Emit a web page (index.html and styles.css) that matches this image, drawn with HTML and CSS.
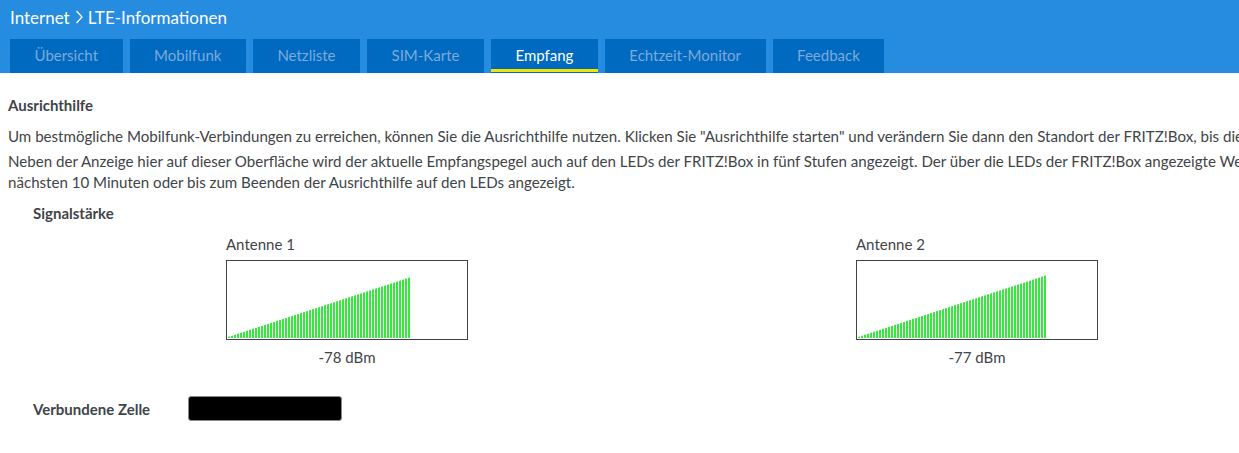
FILE: index.html
```html
<!DOCTYPE html>
<html lang="de">
<head>
<meta charset="utf-8">
<title>LTE-Informationen</title>
<link rel="stylesheet" href="styles.css">
</head>
<body>
<header class="top">
  <h1 class="crumb">Internet<svg class="chev" width="9" height="14" viewBox="0 0 9 14"><polyline points="1.5,1 7,7 1.5,13" fill="none" stroke="#fff" stroke-width="1.3"/></svg>LTE-Informationen</h1>
  <nav class="tabs">
    <a class="tab">Übersicht</a>
    <a class="tab">Mobilfunk</a>
    <a class="tab">Netzliste</a>
    <a class="tab">SIM-Karte</a>
    <a class="tab active">Empfang</a>
    <a class="tab">Echtzeit-Monitor</a>
    <a class="tab">Feedback</a>
  </nav>
</header>
<main class="content">
  <h2 class="section-title">Ausrichthilfe</h2>
  <p class="text">Um bestmögliche Mobilfunk-Verbindungen zu erreichen, können Sie die Ausrichthilfe nutzen. Klicken Sie "Ausrichthilfe starten" und verändern Sie dann den Standort der FRITZ!Box, bis die Signalstärke optimal ist.</p>
  <p class="text">Neben der Anzeige hier auf dieser Oberfläche wird der aktuelle Empfangspegel auch auf den LEDs der FRITZ!Box in fünf Stufen angezeigt. Der über die LEDs der FRITZ!Box angezeigte Wert wird für die<br>nächsten 10 Minuten oder bis zum Beenden der Ausrichthilfe auf den LEDs angezeigt.</p>
  <section class="signal">
    <h3 class="label">Signalstärke</h3>
    <div class="antennas">
      <div class="antenna">
        <div class="ant-name">Antenne 1</div>
        <div class="meter"><div class="bars" style="width:183px;height:61px"></div></div>
        <div class="dbm">-78 dBm</div>
      </div>
      <div class="antenna">
        <div class="ant-name">Antenne 2</div>
        <div class="meter"><div class="bars" style="width:189px;height:63px"></div></div>
        <div class="dbm">-77 dBm</div>
      </div>
    </div>
    <div class="cell-row">
      <span class="label">Verbundene Zelle</span>
      <span class="redacted"></span>
    </div>
  </section>
</main>
</body>
</html>
```
FILE: styles.css
```css
html, body {
  margin: 0;
  padding: 0;
  overflow: hidden;
  background: #fff;
}
body {
  font-family: Lato, "Open Sans", sans-serif;
  color: #3f4448;
  width: 1239px;
}
.top {
  background: #268ce0;
  padding: 0 10px;
  height: 73px;
  display: flex;
  flex-direction: column;
}
.crumb {
  margin: 0;
  height: 39px;
  display: flex;
  align-items: center;
  padding-bottom: 5px;
  box-sizing: border-box;
  font-size: 17px;
  font-weight: 400;
  color: #fff;
}
.chev {
  margin: 0 4px 0 5px;
}
.tabs {
  display: flex;
  gap: 7px;
  height: 34px;
}
.tab {
  background: #0069c0;
  color: #7eaad8;
  font-size: 15px;
  display: flex;
  align-items: center;
  justify-content: center;
  padding: 0 24.5px 2px;
  box-sizing: border-box;
  position: relative;
}
.tab.active {
  color: #fff;
}
.tab.active::after {
  content: "";
  position: absolute;
  left: 0;
  right: 0;
  bottom: 1px;
  height: 3px;
  background: #f2e600;
}
.content {
  padding: 0 8px;
  width: 2000px;
}
.section-title {
  margin: 0;
  padding-top: 22px;
  font-size: 15px;
  font-weight: 700;
  line-height: 20px;
}
.text {
  margin: 11px 0 0;
  font-size: 15.1px;
  line-height: 21px;
}
.text + .text {
  margin-top: 4px;
}
.signal {
  padding-left: 25px;
}
.label {
  margin: 0;
  font-size: 15px;
  font-weight: 700;
  line-height: 20px;
}
.signal > .label {
  margin-top: 10px;
}
.antennas {
  display: flex;
  gap: 388px;
  margin-left: 193px;
  margin-top: 11px;
}
.antenna {
  display: flex;
  flex-direction: column;
  width: 242px;
}
.ant-name {
  font-size: 15px;
  line-height: 20px;
  height: 20px;
}
.meter {
  margin-top: 6px;
  width: 240px;
  height: 78px;
  border: 1px solid #3f4448;
  display: flex;
  align-items: flex-end;
}
.bars {
  margin-left: 1px;
  margin-bottom: 1px;
  background: repeating-linear-gradient(90deg, #35e83c 0 2px, transparent 2px 3px);
  clip-path: polygon(0 100%, 0 calc(100% - 1px), 100% 0, 100% 100%);
}
.dbm {
  text-align: center;
  font-size: 15px;
  line-height: 20px;
  margin-top: 7px;
}
.cell-row {
  display: flex;
  align-items: center;
  margin-top: 29px;
}
.cell-row .label {
  width: 155px;
}
.redacted {
  width: 152px;
  height: 23px;
  background: #000;
  border: 1px solid #8a8a8a;
  border-radius: 3px;
}
```
